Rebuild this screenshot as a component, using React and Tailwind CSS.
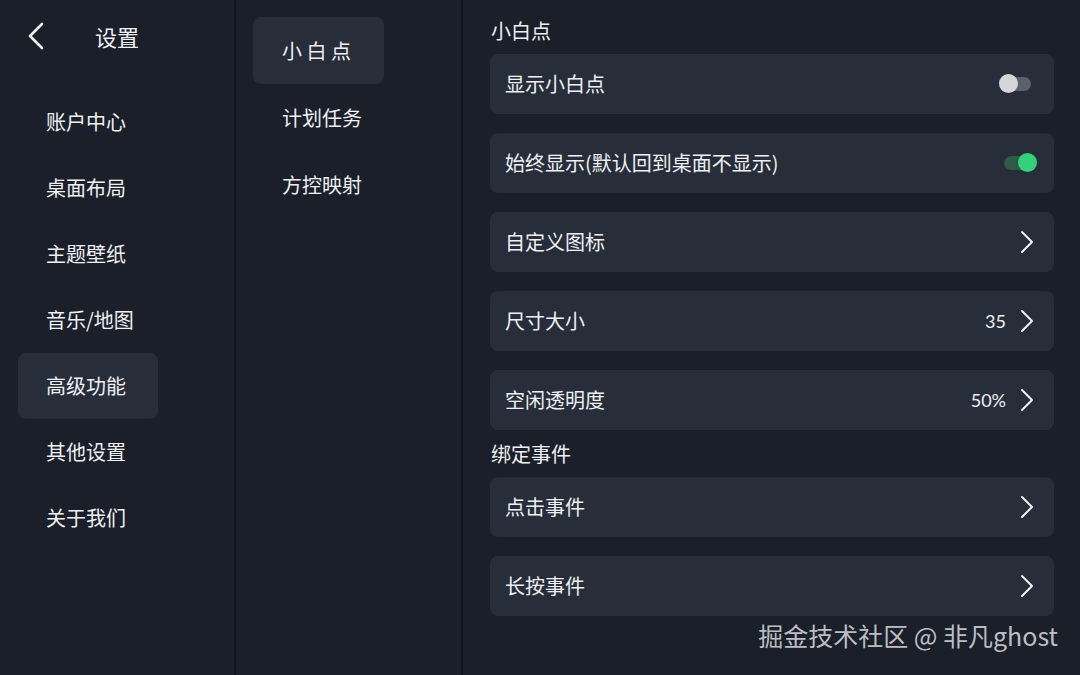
import React, { useState } from 'react';

const leftMenu = ['账户中心', '桌面布局', '主题壁纸', '音乐/地图', '高级功能', '其他设置', '关于我们'];
const midMenu = ['小 白 点', '计划任务', '方控映射'];

const Chevron = () => (
  <svg width="14" height="24" viewBox="0 0 14 24" fill="none" className="shrink-0">
    <path d="M2 2 L12 12 L2 22" stroke="#eef0f3" strokeWidth="2" strokeLinecap="round" strokeLinejoin="round" />
  </svg>
);

const Toggle = ({ on }) => (
  <div className={`relative h-[20px] flex items-center ${on ? 'w-[33px] mr-[-3px]' : 'w-[32px] mr-[3px]'}`}>
    <div className={`w-full h-[14px] rounded-full ${on ? 'bg-[#2f5a48]' : 'bg-[#5b606c]'}`} />
    <div
      className={`absolute top-0 w-[19px] h-[19px] rounded-full ${on ? 'right-0 bg-[#33d17a]' : 'left-0 bg-[#d4d6d9]'}`}
    />
  </div>
);

const Row = ({ label, value, toggle, chevron }) => (
  <div className="h-[60px] rounded-lg bg-[#272d39] flex items-center pl-[15px] pr-[20px]">
    <span className="flex-1 text-[20px]">{label}</span>
    {value && <span className="text-[18px] mr-[14px] font-['Lato',sans-serif]">{value}</span>}
    {toggle !== undefined && <Toggle on={toggle} />}
    {chevron && <Chevron />}
  </div>
);

export default function App() {
  const [left] = useState(4);
  const [mid] = useState(0);

  return (
    <div className="w-[1080px] h-[675px] bg-[#1b1f2a] text-[#eef0f3] flex overflow-hidden relative font-['Noto_Sans_CJK_SC','Noto_Sans',sans-serif]">
      {/* left column */}
      <div className="w-[236px] border-r-2 border-[#10131a] flex flex-col">
        <div className="h-[72px] flex items-center pl-[26px]">
          <svg width="20" height="30" viewBox="0 0 20 30" fill="none">
            <path d="M16 3 L4 15 L16 27" stroke="#eef0f3" strokeWidth="2.6" strokeLinecap="round" strokeLinejoin="round" />
          </svg>
          <span className="ml-[49px] text-[22px]">设置</span>
        </div>
        <div className="flex flex-col pt-[17px] pl-[18px]">
          {leftMenu.map((t, i) => (
            <div
              key={t}
              className={`h-[66px] w-[140px] flex items-center pl-[28px] rounded-lg text-[20px] ${i === left ? 'bg-[#272d39]' : ''}`}
            >
              {t}
            </div>
          ))}
        </div>
      </div>

      {/* middle column */}
      <div className="w-[227px] border-r-2 border-[#10131a] flex flex-col pt-[17px] pl-[17px]">
        {midMenu.map((t, i) => (
          <div
            key={t}
            className={`h-[67px] w-[131px] flex items-center pl-[29px] rounded-lg text-[20px] ${i === mid ? 'bg-[#272d39] h-[66px]' : ''}`}
          >
            {t}
          </div>
        ))}
      </div>

      {/* right content */}
      <div className="flex-1 pl-[27px] pr-[26px] flex flex-col">
        <div className="h-[54px] flex items-center pt-[8px] text-[20px] pl-[1px]">小白点</div>
        <div className="flex flex-col gap-[19px]">
          <Row label="显示小白点" toggle={false} />
          <Row label="始终显示(默认回到桌面不显示)" toggle={true} />
          <Row label="自定义图标" chevron />
          <Row label="尺寸大小" value="35" chevron />
          <Row label="空闲透明度" value="50%" chevron />
        </div>
        <div className="h-[47px] flex items-center text-[20px] pl-[1px]">绑定事件</div>
        <div className="flex flex-col gap-[19px]">
          <Row label="点击事件" chevron />
          <Row label="长按事件" chevron />
        </div>
      </div>

      <div className="absolute right-[22px] top-[623px] text-[25px] text-[#d2d4d8]/90 leading-none">
        掘金技术社区 @ 非凡ghost
      </div>
    </div>
  );
}
